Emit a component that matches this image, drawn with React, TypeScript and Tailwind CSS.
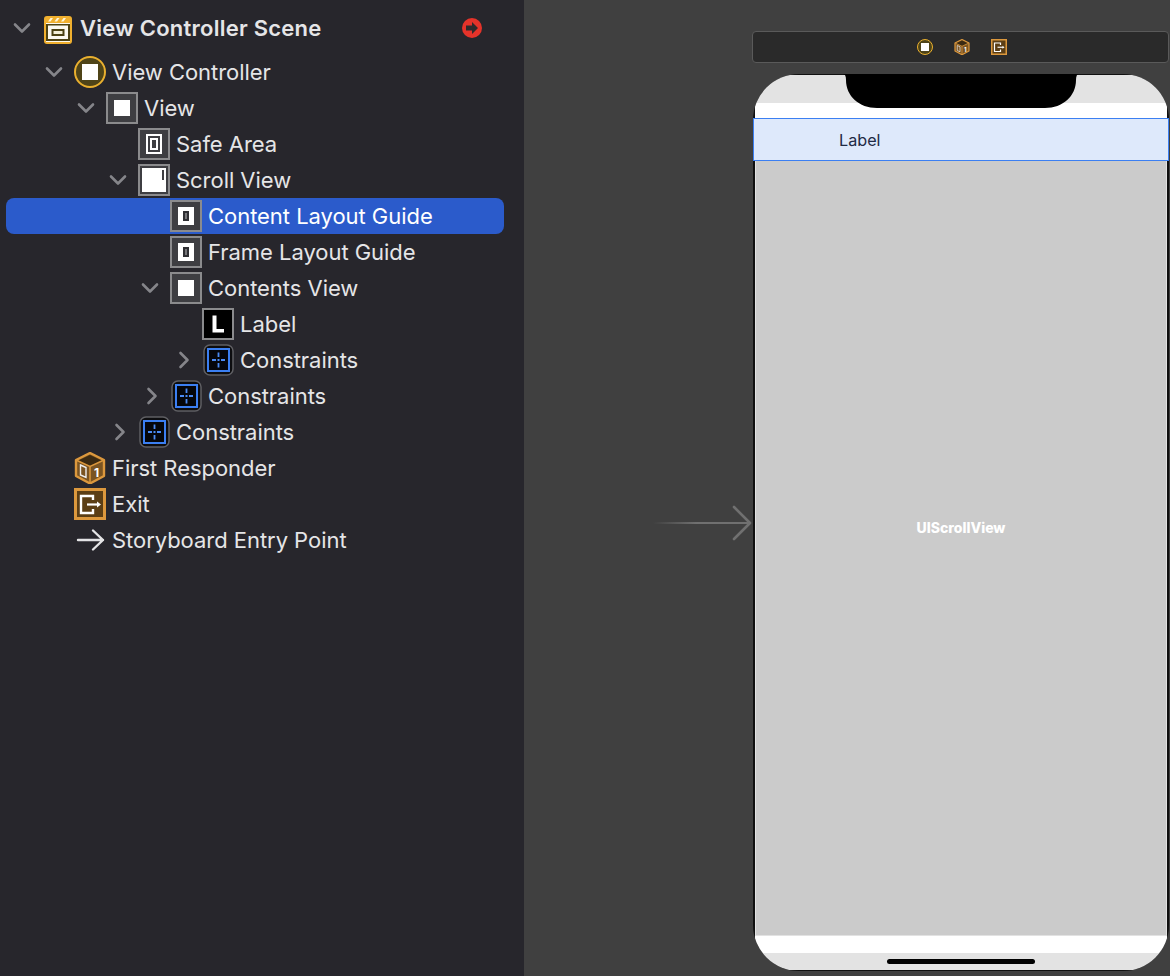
import React from "react";

const font = { fontFamily: "Inter, 'Liberation Sans', sans-serif" };

function Chevron({ open }: { open: boolean }) {
  return (
    <svg width="32" height="32" viewBox="0 0 32 32" fill="none" stroke="#85858a" strokeWidth="2.6" strokeLinecap="round" strokeLinejoin="round">
      {open ? <path d="M9 12.5 L16 19.5 L23 12.5" /> : <path d="M14.5 9 L21.5 16 L14.5 23" />}
    </svg>
  );
}

function Frame({ children, fill = "#3e3e42" }: { children?: React.ReactNode; fill?: string }) {
  return (
    <svg width="32" height="32" viewBox="0 0 32 32">
      <rect x="1" y="1" width="30" height="30" fill={fill} stroke="#8b8b8d" strokeWidth="2" />
      {children}
    </svg>
  );
}

const ViewIcon = () => (
  <Frame>
    <rect x="8" y="8" width="16" height="16" fill="#fff" />
  </Frame>
);

const SafeIcon = () => (
  <Frame>
    <rect x="8" y="6" width="16" height="20" fill="#fff" />
    <rect x="10" y="8" width="12" height="16" fill="#3e3e42" />
    <rect x="12" y="10" width="8" height="12" fill="#fff" />
    <rect x="14" y="12" width="4" height="8" fill="#3e3e42" />
  </Frame>
);

const GuideIcon = () => (
  <Frame>
    <rect x="8" y="7" width="16" height="18" fill="#fff" />
    <rect x="13" y="11" width="6" height="10" fill="#2f2f33" />
    <rect x="15" y="13" width="2" height="6" fill="#77777a" />
  </Frame>
);

const ScrollIcon = () => (
  <Frame>
    <rect x="4" y="4" width="24" height="24" fill="#fff" />
    <rect x="24" y="6" width="2" height="10" fill="#3e3e42" />
  </Frame>
);

const LabelIcon = () => (
  <svg width="32" height="32" viewBox="0 0 32 32">
    <rect x="1" y="1" width="30" height="30" fill="#000" stroke="#8b8b8d" strokeWidth="2" />
    <path d="M10.5 7.5 H14.5 V21 H22 V24.5 H10.5 Z" fill="#fff" />
  </svg>
);

const ConstraintIcon = () => (
  <svg width="32" height="32" viewBox="0 0 32 32">
    <rect x="2" y="1" width="29" height="30" rx="6" fill="#0d0d0f" stroke="#5f5f63" strokeWidth="1.5" />
    <rect x="6" y="5" width="21" height="22" fill="#05070c" stroke="#3b7ff2" strokeWidth="2" />
    <path d="M16.5 8.5 V13 M16.5 15 V17 M16.5 19 V23.5 M10 16 H14 M15.5 16 H17.5 M19 16 H23" stroke="#4a8bf5" strokeWidth="1.8" />
  </svg>
);

const SceneIcon = () => (
  <svg width="32" height="32" viewBox="0 0 32 32">
    <rect x="2" y="4" width="28" height="28" rx="3" fill="#f0b02f" />
    <rect x="4" y="11" width="24" height="19" fill="#fbf9f0" />
    <path d="M6 9.5 L8.5 6 H11 L8.5 9.5 Z M12.5 9.5 L15 6 H17.5 L15 9.5 Z M19 9.5 L21.5 6 H24 L21.5 9.5 Z" fill="#fff6d8" />
    <rect x="10.5" y="18" width="11" height="5" fill="#f4f0d8" stroke="#4c4213" strokeWidth="2" />
    <rect x="4" y="27" width="24" height="2" fill="#4c4213" />
    <rect x="4" y="12" width="24" height="1.5" fill="#4c4213" />
    <rect x="4" y="12" width="2" height="17" fill="#4c4213" />
    <rect x="26" y="12" width="2" height="17" fill="#4c4213" />
  </svg>
);

const ControllerIcon = ({ size = 32 }: { size?: number }) => (
  <svg width={size} height={size} viewBox="0 0 32 32">
    <circle cx="16" cy="16" r="15" fill="#4f4418" stroke="#eab02f" strokeWidth="2" />
    <rect x="8" y="8" width="16" height="16" fill="#fff" />
  </svg>
);

const CubeIcon = ({ size = 32 }: { size?: number }) => (
  <svg width={size} height={size} viewBox="0 0 32 32">
    <path d="M16 1 L30 8 V24 L16 31.5 L2 24 V8 Z" fill="#7a5422" stroke="#dc983d" strokeWidth="2.4" strokeLinejoin="round" />
    <path d="M16 3 L27.5 8.5 L16 14.5 L4.5 8.5 Z" fill="#3b2a12" />
    <path d="M16 14.5 V30" stroke="#dc983d" strokeWidth="1.5" />
    <path d="M3 8.5 L16 14.5 L29 8.5" stroke="#dc983d" strokeWidth="1.5" fill="none" />
    <path d="M6.5 13 L12 15.5 V25.5 L6.5 23 Z" fill="none" stroke="#eee" strokeWidth="1.4" />
    <text x="22.5" y="25" textAnchor="middle" fontSize="12" fontWeight="700" fill="#fff" style={font}>1</text>
  </svg>
);

const ExitIcon = ({ size = 32 }: { size?: number }) => (
  <svg width={size} height={size} viewBox="0 0 32 32">
    <rect x="1.5" y="1.5" width="29" height="29" fill="#5b3e15" stroke="#dc983d" strokeWidth="3" />
    <path d="M19 12 V8 H7 V25 H19 V21" fill="none" stroke="#fff" strokeWidth="2.4" />
    <path d="M13 16.5 H24" stroke="#fff" strokeWidth="2.2" />
    <path d="M23 13.5 L27 16.5 L23 19.5 Z" fill="#fff" />
  </svg>
);

const EntryIcon = () => (
  <svg width="32" height="32" viewBox="0 0 32 32" fill="none" stroke="#e4e4e6" strokeWidth="2.4" strokeLinecap="round" strokeLinejoin="round">
    <path d="M4 16 H29 M19 6.5 L29 16 L19 25.5" />
  </svg>
);

type RowData = {
  level: number;
  open?: boolean;
  icon: React.ReactNode;
  text: string;
  selected?: boolean;
};

const rows: RowData[] = [
  { level: 1, open: true, icon: <ControllerIcon />, text: "View Controller" },
  { level: 2, open: true, icon: <ViewIcon />, text: "View" },
  { level: 3, icon: <SafeIcon />, text: "Safe Area" },
  { level: 3, open: true, icon: <ScrollIcon />, text: "Scroll View" },
  { level: 4, icon: <GuideIcon />, text: "Content Layout Guide", selected: true },
  { level: 4, icon: <GuideIcon />, text: "Frame Layout Guide" },
  { level: 4, open: true, icon: <ViewIcon />, text: "Contents View" },
  { level: 5, icon: <LabelIcon />, text: "Label" },
  { level: 5, open: false, icon: <ConstraintIcon />, text: "Constraints" },
  { level: 4, open: false, icon: <ConstraintIcon />, text: "Constraints" },
  { level: 3, open: false, icon: <ConstraintIcon />, text: "Constraints" },
  { level: 1, icon: <CubeIcon />, text: "First Responder" },
  { level: 1, icon: <ExitIcon />, text: "Exit" },
  { level: 1, icon: <EntryIcon />, text: "Storyboard Entry Point" },
];

const indent: Record<number, string> = {
  1: "pl-[32px]",
  2: "pl-[64px]",
  3: "pl-[96px]",
  4: "pl-[128px]",
  5: "pl-[160px]",
};

function Row({ row }: { row: RowData }) {
  return (
    <div
      className={`flex h-[36px] items-center rounded-lg ${indent[row.level]} ${
        row.selected ? "bg-[#2b5bcb] text-white" : "text-[#e5e5e7]"
      }`}
    >
      <div className="mr-1 h-8 w-8 shrink-0">{row.open !== undefined && <Chevron open={row.open} />}</div>
      <div className="h-8 w-8 shrink-0">{row.icon}</div>
      <span className="ml-1.5 text-[22px] font-[430] leading-none tracking-[-0.04px]">{row.text}</span>
    </div>
  );
}

function Notch() {
  return (
    <svg width="236" height="34" viewBox="0 0 236 34" className="absolute left-[90px] top-0">
      <path d="M0 0 C2 0 3 2 3 6 C3 22 16 34 34 34 H202 C220 34 233 22 233 6 C233 2 234 0 236 0 Z" fill="#000" />
    </svg>
  );
}

function EntryArrow() {
  return (
    <svg width="100" height="36" viewBox="0 0 100 36" className="absolute left-[-100px] top-[431px]" fill="none">
      <defs>
        <linearGradient id="entryFade" x1="0" x2="1" y1="0" y2="0">
          <stop offset="0" stopColor="#707070" stopOpacity="0" />
          <stop offset="0.45" stopColor="#707070" />
          <stop offset="1" stopColor="#707070" />
        </linearGradient>
      </defs>
      <rect x="0" y="17" width="97" height="2" fill="url(#entryFade)" />
      <path d="M81 2 L97 18 L81 34" stroke="#707070" strokeWidth="2.6" strokeLinecap="round" strokeLinejoin="round" />
    </svg>
  );
}

export default function App() {
  return (
    <div className="flex h-[976px] w-[1170px] overflow-hidden bg-[#404040]" style={font}>
      <aside className="h-full w-[524px] shrink-0 bg-[#27262c] pl-1.5 pr-5 pt-2.5">
        <div className="mb-2 flex h-[36px] items-center pr-[22px] text-[#e5e5e7]">
          <div className="mr-1 h-8 w-8 shrink-0">
            <Chevron open />
          </div>
          <div className="h-8 w-8 shrink-0">
            <SceneIcon />
          </div>
          <span className="ml-1.5 text-[22px] font-semibold leading-none tracking-[0.25px]">View Controller Scene</span>
          <svg width="20" height="20" viewBox="0 0 20 20" className="ml-auto">
            <circle cx="10" cy="10" r="10" fill="#e5332a" />
            <path d="M4 7.5 H10 V4 L16 10 L10 16 V12.5 H4 Z" fill="#2e2a2c" />
          </svg>
        </div>
        {rows.map((r, i) => (
          <Row key={i} row={r} />
        ))}
      </aside>

      <main className="flex-1 pl-[228px] pt-[31px]">
        <div className="flex h-8 w-[417px] items-center justify-center gap-[21px] rounded border border-[#5a5a5a] bg-[#2a2a2a] pl-[2px]">
          <ControllerIcon size={16} />
          <CubeIcon size={16} />
          <ExitIcon size={16} />
        </div>

        <div className="relative ml-px mt-[11px] flex h-[897px] w-[416px] flex-col rounded-[46px] bg-[#101010]">
          <EntryArrow />
          <div className="absolute inset-0 flex flex-col overflow-hidden rounded-[46px] pb-px pt-px">
            <div className="mx-[2px] h-[28px] shrink-0 rounded-t-[44px] bg-[#e3e3e3]" />
            <div className="mx-[2px] h-[15px] shrink-0 bg-white" />
            <div className="flex h-[43px] shrink-0 items-center border border-[#3b7ff2] bg-[#dee9fb] pl-[85px] pt-[2px] text-[16.2px] text-[#1e2a45]">
              Label
            </div>
            <div className="mx-[2px] flex h-[775px] shrink-0 items-center justify-center border-x border-b border-[#e2e2e2] bg-[#cbcbcb] pb-[41px] text-[14px] font-extrabold text-white">
              UIScrollView
            </div>
            <div className="mx-[2px] h-[17px] shrink-0 bg-white" />
            <div className="mx-[2px] flex h-[17px] shrink-0 items-start justify-center rounded-b-[44px] bg-[#e3e3e3] pt-[6px]">
              <div className="h-[5px] w-[148px] rounded-full bg-black" />
            </div>
          </div>
          <Notch />
        </div>
      </main>
    </div>
  );
}
